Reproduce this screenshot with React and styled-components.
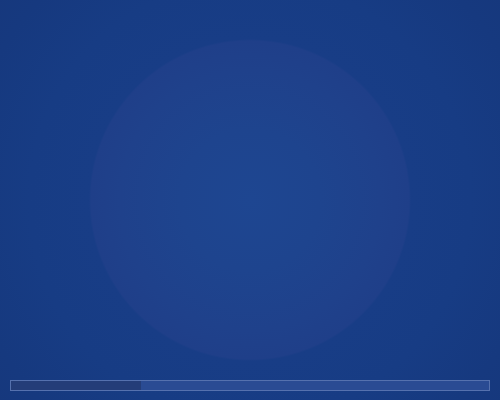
import React from "react";
import styled, { createGlobalStyle } from "styled-components";

const GlobalStyle = createGlobalStyle`
  html, body {
    margin: 0;
    padding: 0;
    background: #173a80;
    font-family: "Liberation Sans", Arial, sans-serif;
  }
`;

// radial glow with a faint disc behind the centre
const Screen = styled.div`
  width: 500px;
  height: 400px;
  box-sizing: border-box;
  display: flex;
  flex-direction: column;
  justify-content: flex-end;
  padding: 0 10px 9px;
  background:
    radial-gradient(circle at 250px 200px, #1e4691 0px, #1e448e 70px, #1f418b 130px, #1f3f89 159px, #183d86 161px, #173c84 220px, #16397f 290px, #16377b 360px);
`;

const Track = styled.div`
  height: 11px;
  box-sizing: border-box;
  border: 1px solid rgba(150, 170, 215, 0.4);
  background: #2a4b93;
  display: flex;
`;

const Fill = styled.div`
  height: 100%;
  background: #243d78;
`;

export default function App() {
  const progress = 27.3;
  return (
    <>
      <GlobalStyle />
      <Screen>
        <Track>
          <Fill style={{ width: `${progress}%` }} />
        </Track>
      </Screen>
    </>
  );
}
